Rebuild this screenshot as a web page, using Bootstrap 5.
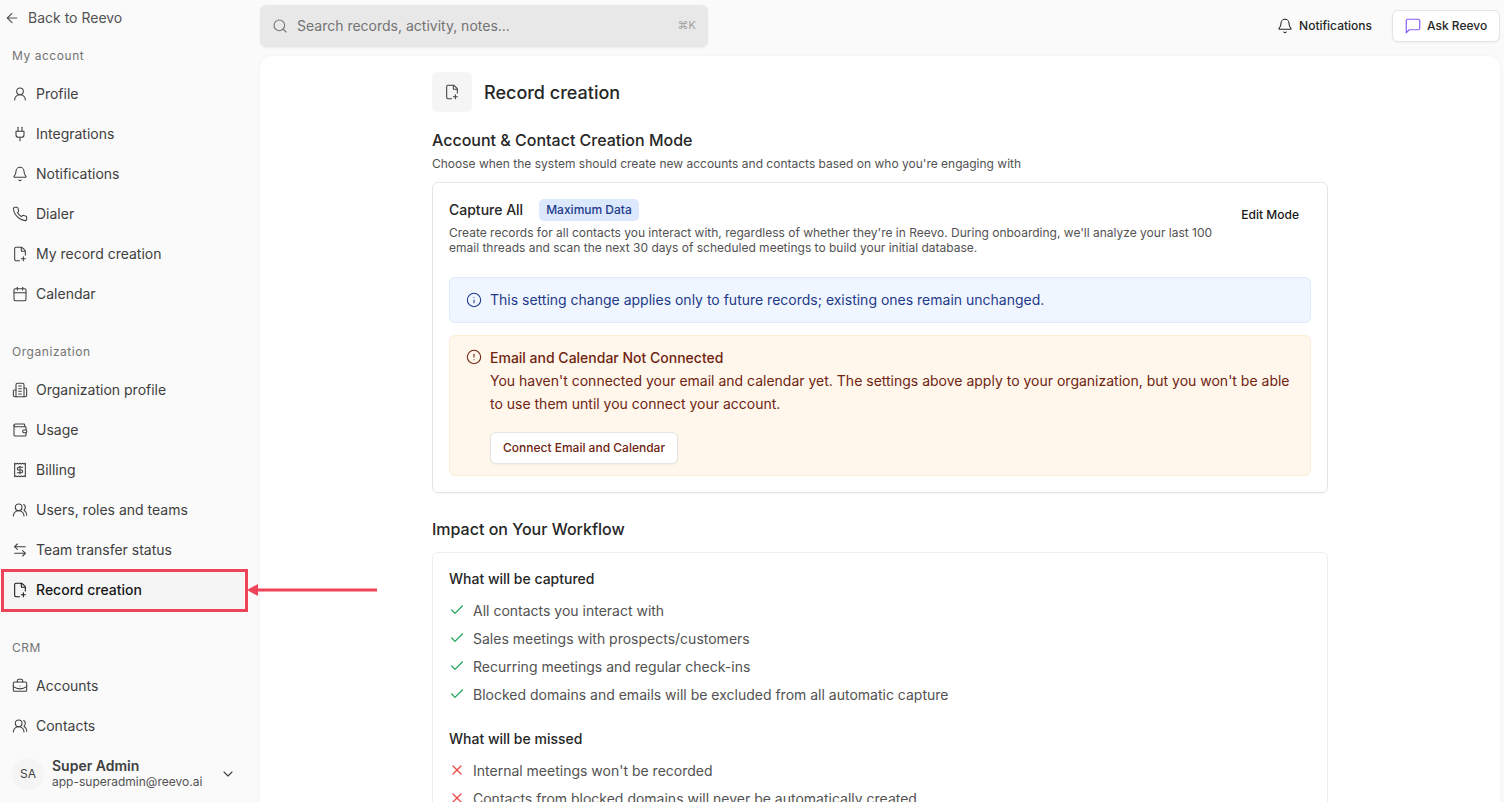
<!DOCTYPE html>
<html lang="en">
<head>
    <meta charset="UTF-8">
    <meta name="viewport" content="width=device-width, initial-scale=1.0">
    <title>Record creation</title>
    <link href="https://cdn.jsdelivr.net/npm/bootstrap@5.3.0/dist/css/bootstrap.min.css" rel="stylesheet">
    <script src="https://cdn.jsdelivr.net/npm/bootstrap@5.3.0/dist/js/bootstrap.bundle.min.js"></script>
    <style>
        html, body { height: 100%; overflow: hidden; }
        body {
            font-family: Inter, "Liberation Sans", sans-serif;
            font-size: 14px;
            background-color: #fafafa;
            color: #171717;
        }
        .ico {
            width: 16px;
            height: 16px;
            flex: none;
            fill: none;
            stroke: currentColor;
            stroke-width: 1.6;
            stroke-linecap: round;
            stroke-linejoin: round;
        }
        .side {
            width: 260px;
            flex: none;
            height: 802px;
        }
        .back-row {
            height: 36px;
            padding-left: 4px;
            padding-bottom: 1px;
            gap: 8px;
            color: #525252;
        }
        .back-row .ico, .side-item .ico, .note-blue .ico { margin-top: 1px; }
        .side-nav { min-height: 0; }
        .side-label {
            height: 32px;
            margin-bottom: 2px;
            padding-left: 12px;
            font-size: 12px;
            font-weight: 400;
            letter-spacing: .55px;
            color: #737373;
        }
        .side-group { margin-top: 4px; margin-bottom: 22px; }
        .side-group:last-child { margin-bottom: 0; }
        .side-item {
            position: relative;
            height: 40px;
            margin-right: 16px;
            margin-left: 4px;
            padding-left: 8px;
            padding-bottom: 1px;
            gap: 8px;
            color: #404040;
            border-radius: 6px;
        }
        .side-item.is-active {
            background-color: #f5f5f5;
            color: #171717;
            font-weight: 500;
        }
        .red-box {
            position: absolute;
            top: -1px;
            left: -3px;
            width: 247px;
            height: 43px;
            border: 3px solid #ee4359;
        }
        .red-arrow {
            position: absolute;
            top: 10px;
            left: 243px;
            width: 130px;
            height: 20px;
        }
        .user-row { height: 56px; padding-left: 12px; margin-top: -1px; }
        .avatar {
            width: 32px;
            height: 32px;
            background-color: #f5f5f5;
            font-size: 12px;
            color: #404040;
        }
        .user-name { font-weight: 600; color: #404040; line-height: 16px; }
        .user-mail { font-size: 12px; color: #525252; line-height: 16px; }
        .user-chev { margin-left: 10px; color: #404040; }
        .top-row { height: 56px; padding-right: 4px; }
        .search-box {
            width: 448px;
            height: 42px;
            margin-top: -4px;
            padding: 0 12px;
            gap: 9px;
            background-color: #e8e8e8;
            border-radius: 6px;
            box-shadow: 0 1px 2px rgba(0, 0, 0, .06);
            color: #737373;
        }
        .search-box span { margin-bottom: 2px; }
        .kbd-hint { font-size: 11px; color: #a3a3a3; }
        .top-actions { margin-top: -4px; }
        .notif-link { gap: 6px; font-size: 12px; font-weight: 500; color: #262626; margin-right: 20px; }
        .ask-btn {
            height: 32px;
            width: 108px;
            padding-left: 11px;
            gap: 5px;
            font-size: 12px;
            font-weight: 500;
            color: #262626;
            background: #fff;
            border: 1px solid #e5e5e5;
            border-radius: 6px;
            box-shadow: 0 1px 2px rgba(0, 0, 0, .05);
        }
        .ask-btn .ico { width: 18px; height: 18px; color: #8b5cf6; }
        .panel {
            margin-right: 4px;
            height: 746px;
            background: #fff;
            border-radius: 12px 12px 0 0;
            box-shadow: 0 0 3px rgba(0, 0, 0, .05);
        }
        .panel-inner { width: 896px; padding-top: 16px; }
        .head-icon {
            width: 40px;
            height: 40px;
            background-color: #f5f5f5;
            border-radius: 6px;
            color: #404040;
        }
        .page-title { font-size: 18px; font-weight: 500; margin: 2px 0 0 12px; color: #262626; }
        .sect-title { font-size: 16px; font-weight: 500; line-height: 24px; margin: 0; color: #262626; }
        .sect-desc { font-size: 12px; line-height: 16px; color: #525252; margin: 4px 0 10px; }
        .box {
            border: 1px solid #e5e5e5;
            border-radius: 6px;
            padding: 16px;
            box-shadow: 0 1px 2px rgba(0, 0, 0, .04);
        }
        .mode-name { font-weight: 500; line-height: 22px; color: #262626; }
        .mode-tag {
            margin-left: 16px;
            padding: 0 7px;
            height: 22px;
            line-height: 22px;
            font-size: 12px;
            font-weight: 500;
            color: #1e3a8a;
            background-color: #dbe8fd;
            border-radius: 5px;
        }
        .mode-desc { width: 780px; font-size: 12px; line-height: 15px; color: #525252; margin: 4px 0 0; }
        .edit-btn { font-size: 12px; font-weight: 500; color: #171717; margin: 8px 12px 0 0; line-height: 16px; }
        .note-blue, .note-orange { border-radius: 6px; padding: 0 16px; gap: 8px; }
        .note-blue {
            margin-top: 22px;
            height: 46px;
            padding-bottom: 1px;
            background-color: #f0f6ff;
            border: 1px solid #dbe8fe;
            color: #1e3a8a;
        }
        .note-orange {
            margin-top: 12px;
            height: 141px;
            padding-top: 10px;
            background-color: #fff6ec;
            border: 1px solid #ffedd5;
            color: #6f2510;
            line-height: 23px;
        }
        .note-orange .ico { margin-top: 3px; }
        .note-head { font-weight: 500; }
        .connect-btn {
            height: 32px;
            width: 188px;
            margin-top: 17px;
            padding: 0 6px 2px;
            font-size: 12px;
            font-weight: 500;
            color: #6f2510;
            background: #fff;
            border: 1px solid #e5e5e5;
            border-radius: 6px;
            box-shadow: 0 1px 2px rgba(0, 0, 0, .05);
        }
        .impact-title { margin: 24px 0 11px; }
        .impact-box { padding-top: 15px; height: 300px; border-color: #ededed; }
        .sub-head { font-weight: 500; line-height: 22px; color: #262626; margin: 0 0 6px; }
        .check-row {
            height: 28px;
            gap: 8px;
            color: #525252;
        }
        .check-row .ico { stroke-width: 1.9; }
        .is-yes .ico { color: #22a55b; }
        .is-no .ico { color: #ef4444; }
        .sub-gap { margin-top: 20px; }
    </style>
</head>
<body class="d-flex">
    <svg class="d-none" xmlns="http://www.w3.org/2000/svg">
        <symbol id="i-back" viewBox="0 0 24 24"><path d="m12 19-7-7 7-7"/><path d="M19 12H5"/></symbol>
        <symbol id="i-user" viewBox="0 0 24 24"><circle cx="12" cy="8" r="5"/><path d="M20 21a8 8 0 0 0-16 0"/></symbol>
        <symbol id="i-plug" viewBox="0 0 24 24"><path d="M12 22v-5"/><path d="M9 8V2"/><path d="M15 8V2"/><path d="M18 8v5a4 4 0 0 1-4 4h-4a4 4 0 0 1-4-4V8Z"/></symbol>
        <symbol id="i-bell" viewBox="0 0 24 24"><path d="M10.268 21a2 2 0 0 0 3.464 0"/><path d="M3.262 15.326A1 1 0 0 0 4 17h16a1 1 0 0 0 .74-1.673C19.41 13.956 18 12.499 18 8A6 6 0 0 0 6 8c0 4.499-1.411 5.956-2.738 7.326"/></symbol>
        <symbol id="i-phone" viewBox="0 0 24 24"><path d="M22 16.92v3a2 2 0 0 1-2.18 2 19.79 19.79 0 0 1-8.63-3.07 19.5 19.5 0 0 1-6-6 19.79 19.79 0 0 1-3.07-8.67A2 2 0 0 1 4.11 2h3a2 2 0 0 1 2 1.72 12.84 12.84 0 0 0 .7 2.81 2 2 0 0 1-.45 2.11L8.09 9.91a16 16 0 0 0 6 6l1.27-1.27a2 2 0 0 1 2.11-.45 12.84 12.84 0 0 0 2.81.7A2 2 0 0 1 22 16.92z"/></symbol>
        <symbol id="i-file" viewBox="0 0 24 24"><path d="M11.35 22H6a2 2 0 0 1-2-2V4a2 2 0 0 1 2-2h8a2.4 2.4 0 0 1 1.706.706l3.588 3.588A2.4 2.4 0 0 1 20 8v5.35"/><path d="M14 2v5a1 1 0 0 0 1 1h5"/><path d="M14 19h6"/><path d="M17 16v6"/></symbol>
        <symbol id="i-cal" viewBox="0 0 24 24"><path d="M8 2v4"/><path d="M16 2v4"/><rect x="3" y="4" width="18" height="18" rx="2"/><path d="M3 10h18"/></symbol>
        <symbol id="i-org" viewBox="0 0 24 24"><path d="M6 22V4a2 2 0 0 1 2-2h8a2 2 0 0 1 2 2v18Z"/><path d="M6 12H4a2 2 0 0 0-2 2v6a2 2 0 0 0 2 2h2"/><path d="M18 9h2a2 2 0 0 1 2 2v9a2 2 0 0 1-2 2h-2"/><path d="M10 6h4"/><path d="M10 10h4"/><path d="M10 14h4"/><path d="M10 18h4"/></symbol>
        <symbol id="i-wallet" viewBox="0 0 24 24"><path d="M19 7V4a1 1 0 0 0-1-1H5a2 2 0 0 0 0 4h15a1 1 0 0 1 1 1v4h-3a2 2 0 0 0 0 4h3a1 1 0 0 0 1-1v-2a1 1 0 0 0-1-1"/><path d="M3 5v14a2 2 0 0 0 2 2h15a1 1 0 0 0 1-1v-4"/></symbol>
        <symbol id="i-bill" viewBox="0 0 24 24"><path d="M4 2v20l2-1 2 1 2-1 2 1 2-1 2 1 2-1 2 1V2l-2 1-2-1-2 1-2-1-2 1-2-1-2 1Z"/><path d="M16 8h-6a2 2 0 1 0 0 4h4a2 2 0 1 1 0 4H8"/><path d="M12 17.5v-11"/></symbol>
        <symbol id="i-users" viewBox="0 0 24 24"><path d="M18 21a8 8 0 0 0-16 0"/><circle cx="10" cy="8" r="5"/><path d="M22 20c0-3.37-2-6.5-4-8a5 5 0 0 0-.45-8.3"/></symbol>
        <symbol id="i-swap" viewBox="0 0 24 24"><path d="M8 3 4 7l4 4"/><path d="M4 7h16"/><path d="m16 21 4-4-4-4"/><path d="M20 17H4"/></symbol>
        <symbol id="i-case" viewBox="0 0 24 24"><path d="M12 12h.01"/><path d="M16 6V4a2 2 0 0 0-2-2h-4a2 2 0 0 0-2 2v2"/><path d="M22 13a18.15 18.15 0 0 1-20 0"/><rect x="2" y="6" width="20" height="14" rx="2"/></symbol>
        <symbol id="i-chev" viewBox="0 0 24 24"><path d="m6 9 6 6 6-6"/></symbol>
        <symbol id="i-search" viewBox="0 0 24 24"><path d="m21 21-4.34-4.34"/><circle cx="11" cy="11" r="8"/></symbol>
        <symbol id="i-chat" viewBox="0 0 24 24"><path d="M21 15a2 2 0 0 1-2 2H7l-4 4V5a2 2 0 0 1 2-2h14a2 2 0 0 1 2 2z"/></symbol>
        <symbol id="i-info" viewBox="0 0 24 24"><circle cx="12" cy="12" r="10"/><path d="M12 16v-4"/><path d="M12 8h.01"/></symbol>
        <symbol id="i-alert" viewBox="0 0 24 24"><circle cx="12" cy="12" r="10"/><path d="M12 8v4"/><path d="M12 16h.01"/></symbol>
        <symbol id="i-check" viewBox="0 0 24 24"><path d="M20 6 9 17l-5-5"/></symbol>
        <symbol id="i-x" viewBox="0 0 24 24"><path d="M18 6 6 18"/><path d="m6 6 12 12"/></symbol>
    </svg>

    <aside class="side d-flex flex-column">
        <div class="back-row d-flex align-items-center flex-shrink-0"><svg class="ico"><use href="#i-back"/></svg>Back to Reevo</div>
        <div class="side-nav flex-grow-1">
            <div class="side-group">
                <div class="side-label d-flex align-items-center">My account</div>
                <div class="side-item d-flex align-items-center"><svg class="ico"><use href="#i-user"/></svg>Profile</div>
                <div class="side-item d-flex align-items-center"><svg class="ico"><use href="#i-plug"/></svg>Integrations</div>
                <div class="side-item d-flex align-items-center"><svg class="ico"><use href="#i-bell"/></svg>Notifications</div>
                <div class="side-item d-flex align-items-center"><svg class="ico"><use href="#i-phone"/></svg>Dialer</div>
                <div class="side-item d-flex align-items-center"><svg class="ico"><use href="#i-file"/></svg>My record creation</div>
                <div class="side-item d-flex align-items-center"><svg class="ico"><use href="#i-cal"/></svg>Calendar</div>
            </div>
            <div class="side-group">
                <div class="side-label d-flex align-items-center">Organization</div>
                <div class="side-item d-flex align-items-center"><svg class="ico"><use href="#i-org"/></svg>Organization profile</div>
                <div class="side-item d-flex align-items-center"><svg class="ico"><use href="#i-wallet"/></svg>Usage</div>
                <div class="side-item d-flex align-items-center"><svg class="ico"><use href="#i-bill"/></svg>Billing</div>
                <div class="side-item d-flex align-items-center"><svg class="ico"><use href="#i-users"/></svg>Users, roles and teams</div>
                <div class="side-item d-flex align-items-center"><svg class="ico"><use href="#i-swap"/></svg>Team transfer status</div>
                <div class="side-item is-active d-flex align-items-center">
                    <svg class="ico"><use href="#i-file"/></svg>Record creation
                    <span class="red-box"></span>
                    <svg class="red-arrow" viewBox="0 0 130 20"><path d="M130 10H10" stroke="#ee4359" stroke-width="3"/><path d="M0 10 11 4v12z" fill="#ee4359"/></svg>
                </div>
            </div>
            <div class="side-group">
                <div class="side-label d-flex align-items-center">CRM</div>
                <div class="side-item d-flex align-items-center"><svg class="ico"><use href="#i-case"/></svg>Accounts</div>
                <div class="side-item d-flex align-items-center"><svg class="ico"><use href="#i-users"/></svg>Contacts</div>
            </div>
        </div>
        <div class="user-row d-flex align-items-center gap-2 flex-shrink-0">
            <div class="avatar rounded-circle d-flex align-items-center justify-content-center">SA</div>
            <div>
                <div class="user-name">Super Admin</div>
                <div class="user-mail">app-superadmin@reevo.ai</div>
            </div>
            <svg class="ico user-chev"><use href="#i-chev"/></svg>
        </div>
    </aside>

    <main class="flex-grow-1">
        <div class="top-row d-flex align-items-center justify-content-between">
            <div class="search-box d-flex align-items-center">
                <svg class="ico"><use href="#i-search"/></svg>
                <span class="flex-grow-1">Search records, activity, notes...</span>
                <span class="kbd-hint">⌘K</span>
            </div>
            <div class="top-actions d-flex align-items-center">
                <div class="notif-link d-flex align-items-center"><svg class="ico"><use href="#i-bell"/></svg>Notifications</div>
                <div class="ask-btn d-flex align-items-center text-nowrap"><svg class="ico"><use href="#i-chat"/></svg>Ask Reevo</div>
            </div>
        </div>
        <div class="panel overflow-hidden">
            <div class="panel-inner mx-auto">
                <div class="d-flex align-items-center mb-2">
                    <div class="head-icon d-flex align-items-center justify-content-center"><svg class="ico"><use href="#i-file"/></svg></div>
                    <h1 class="page-title">Record creation</h1>
                </div>
                <h2 class="sect-title mt-3">Account &amp; Contact Creation Mode</h2>
                <p class="sect-desc">Choose when the system should create new accounts and contacts based on who you're engaging with</p>
                <div class="box">
                    <div class="d-flex justify-content-between">
                        <div>
                            <div class="d-flex align-items-center">
                                <span class="mode-name">Capture All</span>
                                <span class="mode-tag">Maximum Data</span>
                            </div>
                            <p class="mode-desc">Create records for all contacts you interact with, regardless of whether they're in Reevo. During onboarding, we'll analyze your last 100 email threads and scan the next 30 days of scheduled meetings to build your initial database.</p>
                        </div>
                        <div class="edit-btn">Edit Mode</div>
                    </div>
                    <div class="note-blue d-flex align-items-center"><svg class="ico"><use href="#i-info"/></svg>This setting change applies only to future records; existing ones remain unchanged.</div>
                    <div class="note-orange d-flex">
                        <svg class="ico"><use href="#i-alert"/></svg>
                        <div>
                            <div class="note-head">Email and Calendar Not Connected</div>
                            <div>You haven't connected your email and calendar yet. The settings above apply to your organization, but you won't be able to use them until you connect your account.</div>
                            <button class="connect-btn" type="button">Connect Email and Calendar</button>
                        </div>
                    </div>
                </div>
                <h2 class="sect-title impact-title">Impact on Your Workflow</h2>
                <div class="box impact-box">
                    <p class="sub-head">What will be captured</p>
                    <div class="check-row is-yes d-flex align-items-center"><svg class="ico"><use href="#i-check"/></svg>All contacts you interact with</div>
                    <div class="check-row is-yes d-flex align-items-center"><svg class="ico"><use href="#i-check"/></svg>Sales meetings with prospects/customers</div>
                    <div class="check-row is-yes d-flex align-items-center"><svg class="ico"><use href="#i-check"/></svg>Recurring meetings and regular check-ins</div>
                    <div class="check-row is-yes d-flex align-items-center"><svg class="ico"><use href="#i-check"/></svg>Blocked domains and emails will be excluded from all automatic capture</div>
                    <p class="sub-head sub-gap">What will be missed</p>
                    <div class="check-row is-no d-flex align-items-center"><svg class="ico"><use href="#i-x"/></svg>Internal meetings won't be recorded</div>
                    <div class="check-row is-no d-flex align-items-center"><svg class="ico"><use href="#i-x"/></svg>Contacts from blocked domains will never be automatically created</div>
                </div>
            </div>
        </div>
    </main>
</body>
</html>
